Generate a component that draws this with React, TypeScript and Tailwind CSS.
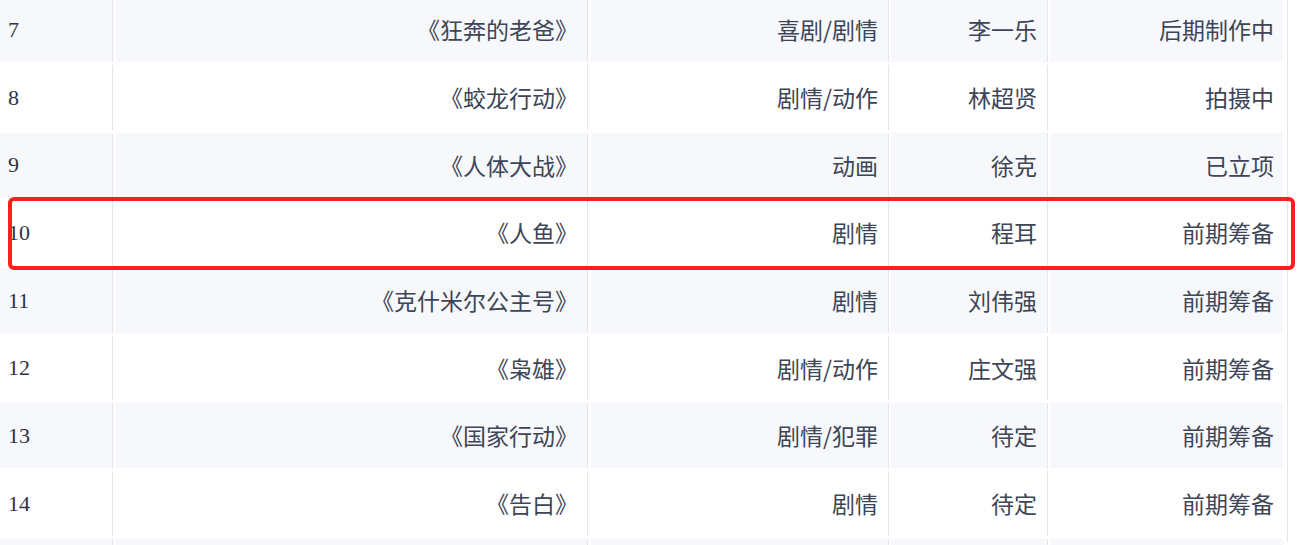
import React from "react";

type Row = { n: number; title: string; genre: string; director: string; status: string };

const rows: Row[] = [
  { n: 7, title: "《狂奔的老爸》", genre: "喜剧/剧情", director: "李一乐", status: "后期制作中" },
  { n: 8, title: "《蛟龙行动》", genre: "剧情/动作", director: "林超贤", status: "拍摄中" },
  { n: 9, title: "《人体大战》", genre: "动画", director: "徐克", status: "已立项" },
  { n: 10, title: "《人鱼》", genre: "剧情", director: "程耳", status: "前期筹备" },
  { n: 11, title: "《克什米尔公主号》", genre: "剧情", director: "刘伟强", status: "前期筹备" },
  { n: 12, title: "《枭雄》", genre: "剧情/动作", director: "庄文强", status: "前期筹备" },
  { n: 13, title: "《国家行动》", genre: "剧情/犯罪", director: "待定", status: "前期筹备" },
  { n: 14, title: "《告白》", genre: "剧情", director: "待定", status: "前期筹备" },
  { n: 15, title: "", genre: "", director: "", status: "" },
];

const cjk = "font-['Noto_Sans_CJK_SC','Noto_Sans',sans-serif]";

export default function App() {
  return (
    <div className="relative w-[1314px] h-[545px] overflow-hidden bg-white">
      <div className="w-[1288px] h-full border-r border-[#e3e5ea]">
        <div className="flex flex-col gap-[3px] mt-[-2.67px]">
          {rows.map((r, i) => {
            const bg = i % 2 === 0 ? "bg-[#f7f8fc]" : "bg-white";
            return (
              <div key={r.n} className="flex h-[64.67px] shrink-0">
                <div
                  className={`${bg} w-[113px] shrink-0 border-r border-[#e3e5ea] flex items-center pl-[8px] text-[22px] text-[#2e3442] font-['Liberation_Serif',serif]`}
                >
                  {r.title ? r.n : ""}
                </div>
                <div
                  className={`${bg} ml-[3px] w-[472px] shrink-0 border-r border-[#e3e5ea] flex items-center justify-end pr-[9px] text-[23px] text-[#3d4556] ${cjk}`}
                >
                  {r.title}
                </div>
                <div
                  className={`${bg} ml-[3px] w-[298px] shrink-0 border-r border-[#e3e5ea] flex items-center justify-end pr-[10px] text-[23px] text-[#3d4556] ${cjk}`}
                >
                  {r.genre}
                </div>
                <div
                  className={`${bg} ml-[2px] w-[157px] shrink-0 border-r border-[#e3e5ea] flex items-center justify-end pr-[10px] text-[23px] text-[#3d4556] ${cjk}`}
                >
                  {r.director}
                </div>
                <div
                  className={`${bg} ml-[2px] w-[233px] shrink-0 flex items-center justify-end pr-[9px] text-[23px] text-[#3d4556] ${cjk}`}
                >
                  {r.status}
                </div>
              </div>
            );
          })}
        </div>
      </div>
      <div className="absolute left-[8px] top-[197px] w-[1287px] h-[73px] border-[4px] border-[#fe1e1e] rounded-[6px] pointer-events-none" />
    </div>
  );
}
